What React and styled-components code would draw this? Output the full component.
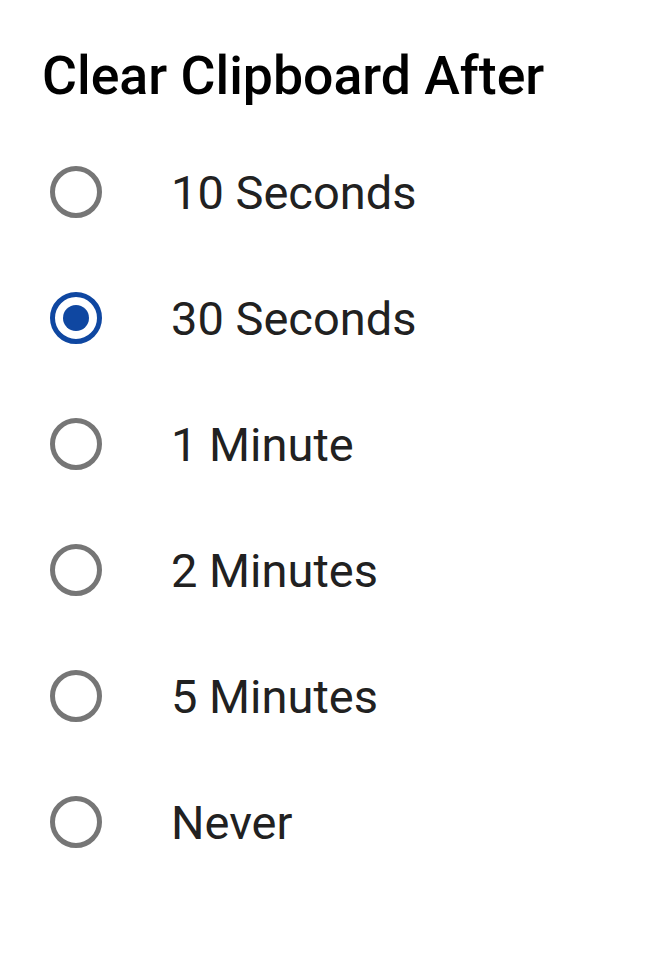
import { useState } from "react";
import styled, { createGlobalStyle } from "styled-components";

const Global = createGlobalStyle`
    body {
        margin: 0;
        background: #fff;
        font-family: Roboto, "Noto Sans", sans-serif;
    }
`

const Page = styled.div`
    padding: 48px 0 0 42px;
`

const Title = styled.h1`
    margin: 0 0 25px;
    font-size: 53.6px;
    line-height: 56px;
    font-weight: 500;
    color: #000;
`

const List = styled.div`
    display: flex;
    flex-direction: column;
`

const Row = styled.label`
    display: flex;
    align-items: center;
    height: 126px;
    cursor: pointer;
`

const Radio = styled.span`
    box-sizing: border-box;
    width: 52px;
    height: 52px;
    margin-left: 8px;
    border-radius: 50%;
    border: 5px solid ${p => p.$checked ? "#0f47a1" : "#767676"};
    display: flex;
    align-items: center;
    justify-content: center;
    &::after {
        content: "";
        width: 26px;
        height: 26px;
        border-radius: 50%;
        background: #0f47a1;
        display: ${p => p.$checked ? "block" : "none"};
    }
`

const Label = styled.span`
    margin-left: 69px;
    font-size: 47px;
    color: #212121;
`

const options = ["10 Seconds", "30 Seconds", "1 Minute", "2 Minutes", "5 Minutes", "Never"];

export default function App() {
    const [value, setValue] = useState("30 Seconds");

    return (
        <Page>
            <Global />
            <Title>Clear Clipboard After</Title>
            <List>
                {options.map(o => (
                    <Row key={o} onClick={() => setValue(o)}>
                        <Radio $checked={value === o} />
                        <Label>{o}</Label>
                    </Row>
                ))}
            </List>
        </Page>
    )
}
